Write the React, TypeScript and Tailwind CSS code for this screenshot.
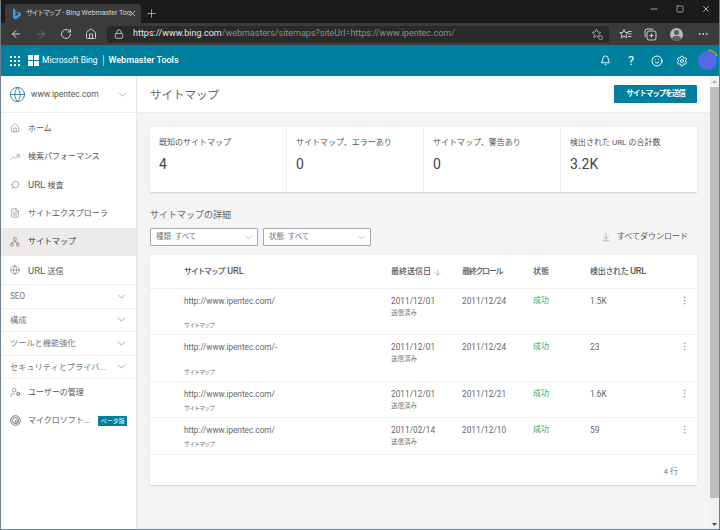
import { ArrowDownToLine, Bell, ChevronDown, Globe, Home, MoreHorizontal, RotateCw, Search, Settings, Smile, TrendingUp, ArrowLeft, ArrowRight, Lock, X, Plus, Minus, Square, Network, FileText, UserCog, ArrowDown, MoreVertical } from "lucide-react";

const FONT = "font-['Roboto','Noto_Sans_CJK_JP',sans-serif]";

const NAV_ITEMS = [
  { label: "ホーム", icon: Home },
  { label: "検索パフォーマンス", icon: TrendingUp },
  { label: "検査", latin: "URL ", icon: Search, flip: true },
  { label: "サイトエクスプローラ", icon: FileText },
  { label: "サイトマップ", icon: Network, active: true },
  { label: "送信", latin: "URL ", icon: Globe },
];

const GROUPS = ["SEO", "構成", "ツールと機能強化", "セキュリティとプライバ..."];

const STATS = [
  { label: "既知のサイトマップ", value: "4" },
  { label: "サイトマップ、エラーあり", value: "0" },
  { label: "サイトマップ、警告あり", value: "0" },
  { label: "検出された URL の合計数", value: "3.2K" },
];

const ROWS = [
  { url: "http://www.ipentec.com/", sent: "2011/12/01", crawl: "2011/12/24", count: "1.5K", h: "h-[46px]", gap: "mt-[13px]" },
  { url: "http://www.ipentec.com/-", sent: "2011/12/01", crawl: "2011/12/24", count: "23", h: "h-[47px]", gap: "mt-[14px]" },
  { url: "http://www.ipentec.com/", sent: "2011/12/01", crawl: "2011/12/21", count: "1.6K", h: "h-[36px]", gap: "mt-[3px]" },
  { url: "http://www.ipentec.com/", sent: "2011/02/14", crawl: "2011/12/10", count: "59", h: "h-[37px]", gap: "mt-[3px]" },
];

function BrowserChrome() {
  return (
    <div className="shrink-0 text-[#d8d8d8]">
      <div className="flex h-[23px] items-end bg-[#1b1b1b] pl-[4px]">
        <div className="flex h-[19px] w-[136px] items-center rounded-t-[3px] bg-[#3b3b3b] pl-[7px]">
          <svg width="10" height="12" viewBox="0 0 10 12" className="shrink-0">
            <path d="M1 0.5 L3.5 1.5 V8 L7 6 L5 5 L4.5 3.5 L9 5 V7.5 L3.5 11.5 L1 10 Z" fill="#2f9fe6" />
          </svg>
          <span className="ml-[4px] w-[100px] text-[7.2px] tracking-[-0.1px] whitespace-nowrap text-[#d4d4d4]">
            <span className="tracking-[-1.6px]">サイトマップ</span>
            <span className="ml-[3px]">- Bing Webmaster Too</span>
          </span>
          <X size={9} className="ml-[2px] shrink-0 text-[#e0e0e0]" />
        </div>
        <Plus size={13} strokeWidth={1.3} className="mb-[3px] ml-[4px] text-[#cfcfcf]" />
        <div className="mb-[9px] ml-auto flex items-center gap-[16px] pr-[8px] text-[#c9c9c9]">
          <Minus size={10} />
          <Square size={10} className="p-[1px]" />
          <X size={10} />
        </div>
      </div>
      <div className="flex h-[22px] items-center bg-[#3b3b3b] pl-[9px]">
        <ArrowLeft size={12} className="text-[#d8d8d8]" />
        <ArrowRight size={12} className="ml-[13px] text-[#6c6c6c]" />
        <RotateCw size={12} className="ml-[13px] text-[#d0d0d0]" />
        <Home size={12} className="ml-[13px] text-[#d0d0d0]" />
        <div className="ml-[10px] flex h-[17px] w-[502px] items-center rounded-[2px] bg-[#2a2a2a] pl-[7px] pr-[6px]">
          <Lock size={10} className="text-[#cfcfcf]" />
          <span className="ml-[9px] text-[9px] whitespace-nowrap text-[#8f8f8f]">
            <span className="text-[#e8e8e8]">https://www.bing.com</span>/webmasters/sitemaps?siteUrl=https://www.ipentec.com/
          </span>
          <svg width="12" height="12" viewBox="0 0 12 12" className="ml-auto" fill="none" stroke="#9a9a9a">
            <path d="M5.5 1 L6.8 4 L10 4.3 L7.6 6.4 L8.2 9.5 L5.5 8 L2.8 9.5 L3.4 6.4 L1 4.3 L4.2 4 Z" />
            <circle cx="9.5" cy="9.5" r="2" fill="#2a2a2a" />
          </svg>
        </div>
        <svg width="13" height="12" viewBox="0 0 13 12" className="ml-[10px]" fill="none" stroke="#d0d0d0">
          <path d="M5 1.5 L6.2 4.4 L9.2 4.7 L7 6.7 L7.6 9.8 L5 8.2 L2.4 9.8 L3 6.7 L0.8 4.7 L3.8 4.4 Z M9 3.5 H12.5 M9.5 6 H12.5 M9 8.5 H12.5" />
        </svg>
        <svg width="13" height="13" viewBox="0 0 13 13" className="ml-[12px]" fill="none" stroke="#d0d0d0">
          <rect x="3" y="3" width="9" height="9" rx="2" />
          <path d="M1 9 V3 A2 2 0 0 1 3 1 H9 M7.5 5.5 V9.5 M5.5 7.5 H9.5" />
        </svg>
        <div className="relative ml-[13px] h-[13px] w-[13px] overflow-hidden rounded-full bg-[#b9b9b9]">
          <div className="absolute top-[2px] left-[4px] h-[5px] w-[5px] rounded-full bg-[#5d5d5d]" />
          <div className="absolute top-[8px] left-[2px] h-[7px] w-[9px] rounded-full bg-[#5d5d5d]" />
        </div>
        <MoreHorizontal size={12} className="ml-[14px] text-[#d0d0d0]" />
      </div>
    </div>
  );
}

function AppHeader() {
  return (
    <div className="flex h-[31px] shrink-0 items-center bg-[#00809f] pl-[9px] text-white">
      <div className="grid grid-cols-3 gap-[2px]">
        {Array.from({ length: 9 }).map((_, i) => (
          <div key={i} className="h-[2px] w-[2px] bg-white" />
        ))}
      </div>
      <div className="ml-[8px] grid grid-cols-2 gap-[1px]">
        <div className="h-[5px] w-[5px] bg-white" />
        <div className="h-[5px] w-[5px] bg-white" />
        <div className="h-[5px] w-[5px] bg-white" />
        <div className="h-[5px] w-[5px] bg-white" />
      </div>
      <span className="ml-[3px] text-[8.5px]">Microsoft Bing</span>
      <div className="ml-[5px] h-[11px] w-px bg-[#8cc4d2]" />
      <span className="ml-[5px] text-[9px] font-medium">Webmaster Tools</span>
      <div className="ml-auto flex items-center pr-[2px]">
        <Bell size={11} />
        <span className="ml-[15px] w-[10px] text-center text-[12px] leading-none">?</span>
        <Smile size={12} className="ml-[15px]" />
        <Settings size={12} className="ml-[13px]" />
        <div className="relative ml-[10px] h-[19px] w-[19px] rounded-full bg-[#5468e8]">
          <svg width="24" height="24" viewBox="0 0 24 24" className="absolute -top-[3px] -left-[2px]" fill="none">
            <path d="M12 2 A10 10 0 0 1 21 8" stroke="#e8b800" strokeWidth="1.2" />
          </svg>
        </div>
      </div>
    </div>
  );
}

function Sidebar() {
  return (
    <aside className="flex w-[136px] shrink-0 flex-col border-r border-[#e6e6e6] bg-white">
      <div className="flex h-[37px] shrink-0 items-center border-b border-[#ececec] pl-[8px] pr-[7px]">
        <Globe size={17} strokeWidth={1.2} className="text-[#1a7aa0]" />
        <span className="ml-[5px] text-[8.5px] text-[#555]">www.ipentec.com</span>
        <ChevronDown size={13} strokeWidth={1} className="ml-auto text-[#777]" />
      </div>
      <nav className="flex flex-col pt-[1px]">
        {NAV_ITEMS.map((item) => (
          <div key={item.label} className={`flex h-[28.4px] items-center pl-[9px] text-[#555] ${item.active ? "bg-[#edebe9]" : ""}`}>
            <item.icon size={10} strokeWidth={1.1} className={`shrink-0 ${item.flip ? "-scale-x-100" : ""}`} />
            <span className={`ml-[8px] pt-[1px] text-[8px] ${item.active ? "text-[#333]" : ""}`}>
              {item.latin && <span className="text-[9.5px]">{item.latin}</span>}
              {item.label}
            </span>
          </div>
        ))}
      </nav>
      <div className="flex flex-col border-t border-[#f0f0f0]">
        {GROUPS.map((g) => (
          <div key={g} className="flex h-[23.4px] items-center justify-between border-b border-[#f0f0f0] pl-[9px] pr-[8px] text-[8.2px] text-[#777]">
            {g}
            <ChevronDown size={13} strokeWidth={1} className="text-[#666]" />
          </div>
        ))}
      </div>
      <div className="flex h-[28px] items-center pl-[9px] text-[#555]">
        <UserCog size={11} strokeWidth={1.1} />
        <span className="ml-[7px] pt-[1px] text-[8px]">ユーザーの管理</span>
      </div>
      <div className="flex h-[28px] items-center pl-[9px] text-[#555]">
        <svg width="11" height="11" viewBox="0 0 11 11" fill="none" stroke="#666" strokeWidth="0.9">
          <circle cx="5.5" cy="5.5" r="4.8" />
          <circle cx="5.5" cy="5.5" r="3" />
          <circle cx="6.5" cy="6.5" r="1.3" />
        </svg>
        <span className="ml-[7px] pt-[1px] text-[8px]">マイクロソフト...</span>
        <span className="ml-[8px] flex h-[10px] w-[29px] items-center justify-center bg-[#00809f] text-[6px] text-white">ベータ版</span>
      </div>
    </aside>
  );
}

function StatCards() {
  return (
    <div className="grid h-[65px] grid-cols-[137px_137px_137px_136px] rounded-[1px] bg-white shadow-[0_1px_2px_rgba(0,0,0,0.15)]">
      {STATS.map((s, i) => (
        <div key={s.label} className={`pl-[9px] pt-[9px] ${i < 3 ? "border-r border-[#ececec]" : ""}`}>
          <div className="text-[8px] leading-[13px] text-[#555]">{s.label}</div>
          <div className="mt-[5px] text-[14px] leading-[20px] text-[#444]">{s.value}</div>
        </div>
      ))}
    </div>
  );
}

function FilterSelect({ label }: { label: string }) {
  return (
    <div className="flex h-[18px] w-[108px] items-center justify-between rounded-[1px] border border-[#a8a8a8] bg-white pl-[5px] pr-[3px] text-[7.5px] text-[#777]">
      {label}
      <ChevronDown size={11} strokeWidth={1} className="text-[#777]" />
    </div>
  );
}

function SitemapTable() {
  return (
    <div className="mt-[9px] rounded-[1px] bg-white shadow-[0_1px_2px_rgba(0,0,0,0.15)]">
      <div className="flex h-[34px] items-center border-b border-[#eeeeee] pt-[1px] text-[8px] font-medium text-[#555]">
        <div className="w-[241px] pl-[34px]">
          <span className="tracking-[-1.3px]">サイトマップ</span>
          <span className="ml-[3px] text-[9px]">URL</span>
        </div>
        <div className="flex w-[71px] items-center">
          最終送信日
          <ArrowDown size={9} strokeWidth={1.2} className="ml-[2px] text-[#2b88c8]" />
        </div>
        <div className="w-[71px] tracking-[-1.3px]">最終クロール</div>
        <div className="w-[57px]">状態</div>
        <div className="tracking-[-0.3px]">
          検出された <span className="text-[9px]">URL</span>
        </div>
      </div>
      {ROWS.map((r, i) => (
        <div key={i} className={`relative flex border-b border-[#f2f2f2] text-[#666] ${r.h}`}>
          <div className="w-[241px] pl-[34px] pt-[6px]">
            <div className="text-[8.2px] leading-[12px]">{r.url}</div>
            <div className={`text-[6px] leading-[10px] tracking-[-1px] text-[#777] ${r.gap}`}>サイトマップ</div>
          </div>
          <div className="w-[71px] pt-[6px]">
            <div className="text-[8.3px] leading-[12px]">{r.sent}</div>
            <div className="mt-[1px] text-[6.5px] leading-[10px] text-[#777]">送信済み</div>
          </div>
          <div className="w-[71px] pt-[6px] text-[8.3px] leading-[12px]">{r.crawl}</div>
          <div className="w-[57px] pt-[6px] text-[8px] leading-[12px] text-[#4a9d4e]">成功</div>
          <div className="pt-[6px] text-[8.3px] leading-[12px]">{r.count}</div>
          <MoreVertical size={11} strokeWidth={1.2} className="absolute top-[6px] right-[7px] text-[#888]" />
        </div>
      ))}
      <div className="flex h-[30px] items-center justify-end pt-[3px] pr-[19px] text-[8px] text-[#777]">4 行</div>
    </div>
  );
}

function Scrollbar() {
  return (
    <div className="flex w-[9px] shrink-0 flex-col items-center bg-[#f1f1f1]">
      <svg width="5" height="3" viewBox="0 0 5 3" className="mt-[4px]"><path d="M2.5 0 L5 3 H0 Z" fill="#b0b0b0" /></svg>
      <div className="mt-[4px] h-[411px] w-full bg-[#bfbfbf]" />
      <svg width="5" height="3" viewBox="0 0 5 3" className="mt-auto mb-[3px]"><path d="M0 0 H5 L2.5 3 Z" fill="#505050" /></svg>
    </div>
  );
}

export default function App() {
  return (
    <div className={`flex h-[530px] w-[720px] flex-col overflow-hidden border-x border-b border-[#6d7f8c] bg-white ${FONT}`}>
      <BrowserChrome />
      <AppHeader />
      <div className="flex min-h-0 flex-1">
        <Sidebar />
        <main className="flex min-w-0 flex-1 flex-col bg-[#f4f4f4]">
          <div className="flex h-[37px] shrink-0 items-center justify-between border-b border-[#ececec] bg-white pl-[13px] pr-[13px]">
            <h1 className="pt-[3px] text-[11.5px] text-[#666]">サイトマップ</h1>
            <button className="flex h-[18px] w-[83px] items-center justify-center rounded-[1px] bg-[#00809f] text-[7.5px] font-bold tracking-[-1px] text-white">
              サイトマップを送信
            </button>
          </div>
          <div className="pl-[13px] pr-[13px] pt-[14px]">
            <StatCards />
            <h2 className="mt-[16px] text-[9px] leading-[15px] text-[#666]">サイトマップの詳細</h2>
            <div className="mt-[5px] flex items-center gap-[5px]">
              <FilterSelect label="種類: すべて" />
              <FilterSelect label="状態: すべて" />
              <div className="ml-auto flex items-center pr-[9px] text-[8px] text-[#555]">
                <ArrowDownToLine size={10} strokeWidth={1.1} className="mr-[6px] text-[#2b88c8]" />
                すべてダウンロード
              </div>
            </div>
            <SitemapTable />
          </div>
        </main>
        <Scrollbar />
      </div>
    </div>
  );
}
